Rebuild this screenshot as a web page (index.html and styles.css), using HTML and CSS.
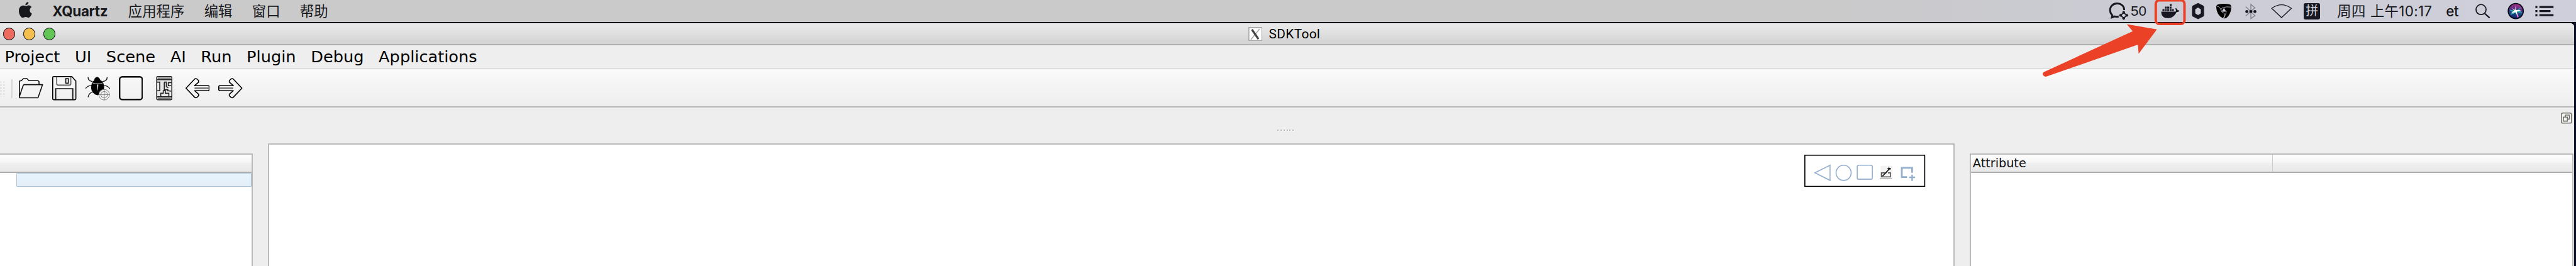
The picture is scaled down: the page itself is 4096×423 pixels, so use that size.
FILE: index.html
```html
<!DOCTYPE html>
<html lang="zh">
<head>
<meta charset="utf-8">
<title>SDKTool</title>
<link rel="stylesheet" href="styles.css">
</head>
<body>
<div class="screen">
  <header class="macbar">
    <svg class="apple" viewBox="0 0 26 32"><path d="M13.500 8.200C15.500 8.200 17 6.800 19.500 6.800C22 6.900 24.200 8.300 25.300 10.300C20 13.500 20.700 21 26 23.200C24.800 26.500 22.200 31 19.500 31.200C17.200 31.300 16.500 29.900 13.600 29.900C10.700 29.900 10 31.200 7.700 31.300C4 31.400 0 24.200 0 18C0 11.600 3.600 7.500 8 7.300C10.300 7.200 12 8.200 13.500 8.200ZM13 6.500C13 2.700 16 .2 19 0C19.300 3.500 16.500 6.600 13 6.500Z"/></svg>
    <nav class="macmenu"><b>XQuartz</b><span>应用程序</span><span>编辑</span><span>窗口</span><span>帮助</span></nav>
    <div class="status">
      <svg class="s-chat" viewBox="4180 0 50 44"><g fill="none" stroke="#171821" stroke-width="3.600"><path d="M4217 20C4217 2 4188.500 3 4189 20.500C4189 25 4191 28 4193.500 30.500L4192.500 34.500L4198 32.500Q4202 33.500 4206 32.800"/><path d="M4216 25L4222 30.500L4216 36L4210 30.500Z" stroke-width="2.200"/></g><g fill="#171821"><circle cx="4216" cy="24.500" r="2.700"/><circle cx="4222.300" cy="30.500" r="2.700"/><circle cx="4216" cy="36.500" r="2.700"/><circle cx="4209.700" cy="30.500" r="2.700"/></g></svg>
      <span class="count">50</span>
      <svg class="s-docker" viewBox="4274 0 70 44"><path fill="#171821" d="M4291 23H4319Q4321 22.500 4320 19.500L4318.500 17.500L4320 16Q4323 17.500 4323.500 20.500Q4326 20 4327 21.500Q4325.500 24 4321 24.200C4318 31 4312 36 4304 36C4295 36 4290.500 31 4291 23ZM4293.300 18h3.800v4h-3.800zM4298 18h3.800v4h-3.800zM4302.700 18h3.800v4h-3.800zM4307.400 18h3.800v4h-3.800zM4312.100 18h3.800v4h-3.800zM4298 13.200h3.800v4h-3.800zM4302.700 13.200h3.800v4h-3.800zM4307.400 13.200h3.800v4h-3.800zM4307.800 8h3.800v4h-3.800z"/></svg>
      <svg class="s-hex" viewBox="4344 0 50 44"><path fill="#171821" fill-rule="evenodd" d="M4364 6L4374 11Q4376 12 4376 14V30Q4376 32 4374 33L4364 38L4354 33Q4352 32 4352 30V14Q4352 12 4354 11ZM4364 15L4358.500 18.500V26.500L4364 30L4369.500 26.500V18.500Z"/></svg>
      <svg class="s-shield" viewBox="4394 0 50 44"><path d="M4400 13Q4401 9 4405 8.500Q4415 6.500 4426 8.500Q4430 9.500 4430 14Q4430 24 4424 32Q4419 38 4413 36Q4401 30 4400 13Z"/><path d="M4415.500 15.500L4420 23H4411Z" fill="#cbccd5"/><g fill="none" stroke="#cbccd5" stroke-width="1.100"><path d="M4401 12Q4408 13 4411 23Q4412 25 4415 26Q4419 28 4416 36"/><path d="M4409 20Q4411 12 4429 14"/><path d="M4420 22Q4420 30 4414 35"/></g></svg>
      <svg class="s-bt" viewBox="4444 0 54 44"><path fill="none" stroke="#83848d" stroke-width="1.800" d="M4459 13.500L4477 31L4469 37V8.500L4477 15.500L4459 31.500"/><g fill="#171821"><circle cx="4461" cy="23" r="3"/><circle cx="4469" cy="23" r="3"/><circle cx="4477" cy="23" r="3"/></g></svg>
      <svg class="s-wifi" viewBox="4498 0 66 44"><path fill="none" stroke="#171821" stroke-width="1.700" d="M4509.500 16.500Q4529 2.500 4548.500 16.500L4529 35Z"/></svg>
      <span class="ime">拼</span>
      <span class="clock"><span>周四</span><span>上午10:17</span></span>
      <span class="user">et</span>
      <svg class="s-search" viewBox="4900 0 60 44"><g fill="none" stroke="#171821" stroke-width="2.200"><circle cx="4925" cy="19" r="10"/><path d="M4932 26.500L4942 35.500" stroke-width="2.800"/></g></svg>
      <svg class="s-siri" viewBox="4960 0 66 44"><defs><linearGradient id="siri" x1=".55" y1="0" x2=".4" y2="1"><stop offset="0" stop-color="#b0328c"/><stop offset=".4" stop-color="#55307f"/><stop offset=".65" stop-color="#164a86"/><stop offset="1" stop-color="#101a66"/></linearGradient></defs><circle cx="4994" cy="22" r="15" fill="url(#siri)" stroke="#080914" stroke-width="2.200"/><path fill="#35b8b5" d="M4994 22L5005 14L5000 21L5008 26L4996 24L4983 30L4988 24L4981 19Z"/><path fill="#e765bd" d="M4994 22L4997 35L5000 33Z"/><path fill="#fff" d="M4993 12L4995 20L5005 20L4996 23L4998 32L4993 24L4984 27L4991 21L4986 16L4993 20Z"/></svg>
      <svg class="s-list" viewBox="5026 0 54 44"><path fill="#171821" d="M5034 12h4v4h-4zM5042 12h28v4h-28zM5034 20h4v4h-4zM5042 20h22v4h-22zM5034 28h4v4h-4zM5042 28h28v4h-28z"/></svg>
    </div>
  </header>

  <main class="window">
    <div class="titlebar">
      <div class="lights"><i class="red"></i><i class="yellow"></i><i class="green"></i></div>
      <div class="title">
        <svg class="xicon" viewBox="0 0 28 28"><rect x="1" y="1" width="26" height="26" fill="#fff" stroke="#aaa" stroke-width="2"/><path d="M22 4L5 25" stroke="#aaa" stroke-width="2"/><path d="M7 5L20 24" stroke="#444" stroke-width="4"/></svg>
        <span>SDKTool</span>
      </div>
    </div>
    <nav class="menubar"><span>Project</span><span>UI</span><span>Scene</span><span>AI</span><span>Run</span><span>Plugin</span><span>Debug</span><span>Applications</span></nav>
    <div class="toolbar">
      <i class="grip"></i><i class="separator"></i>
      <div class="tools">
        <svg viewBox="0 0 48 48"><path fill="none" stroke="#111" stroke-width="2" stroke-linejoin="round" d="M1 43V10L5 9L9 5H16L20 9H38L40 11V17M1 43H38L47 17H10L8 20L1 41"/></svg>
        <svg viewBox="0 0 48 48"><path fill="none" stroke="#000" stroke-width="2" d="M1 3Q1 1 3 1H39L47 10V45Q47 47 45 47H3Q1 47 1 45Z"/><path fill="none" stroke="#555" stroke-width="2" d="M9 1V15Q9 18 12 18H34Q37 18 37 15V1"/><path fill="none" stroke="#111" stroke-width="2" d="M27 5h5v9h-5zM7 47V25H41V47"/><path fill="none" stroke="#888" stroke-width="1" d="M8.500 46V26M39.500 46V26"/></svg>
        <svg viewBox="0 0 48 48"><path fill="none" stroke="#222" stroke-width="1.800" d="M5 2Q5 10 14 11M43 2Q43 10 34 11M0 25Q4 18 14 19M48 25Q44 18 34 19M5 42Q6 34 15 31"/><path d="M15 10Q18 9 18 5Q23-2 28 5Q29 9 33 10Q39 18 36 27Q31 37 24 38Q16 37 12 28Q9 18 15 10Z"/><path fill="#ccc" d="M14 13Q24 16 34 13V14.500Q24 17 14 14.500ZM22.500 17h3l-1 11h-1z"/><circle cx="37" cy="37" r="11" fill="#f2f2f2"/><g fill="none" stroke="#666" stroke-width="1"><circle cx="37" cy="37" r="10.500"/><circle cx="37" cy="37" r="6.500"/><path d="M26 37h22M37 26v22"/></g></svg>
        <svg viewBox="0 0 48 48"><rect x="1.500" y="1.500" width="45" height="45" rx="5" fill="none" stroke="#111" stroke-width="3"/></svg>
        <svg viewBox="0 0 48 48"><path stroke="#ddd" stroke-width="1" d="M1 6L7 0M1 14L8 7M1 22L8 15M1 30L8 23M1 38L8 31M1 46L8 39M40 8L47 1M40 16L47 9M40 24L47 17M40 32L47 25M40 40L47 33M40 47L47 41"/><g fill="none" stroke="#222" stroke-width="2"><rect x="9" y="1" width="30" height="46" rx="2" fill="#e8e8e8"/><path d="M9 7H39M9 41H39M10 12H15V29H10M39 13H32V19H38M24 12V27H31V29L38 30M24 12H28V21L32 23M17 40V34H22V29H26V34H33V40"/></g><path stroke="#777" stroke-width="2" d="M11 4H37M11 44H37"/></svg>
        <svg viewBox="0 0 48 48"><path d="M18 24H46" stroke="#777" stroke-width="3"/><path fill="none" stroke="#000" stroke-width="2" stroke-linejoin="round" d="M1 24L18 6Q20 4 23 6L26 9V12L18 19H46L47 21V27L46 29H18L26 36V39L23 42Q20 44 18 42Z"/></svg>
        <svg viewBox="0 0 48 48"><path d="M2 24H30" stroke="#777" stroke-width="3"/><path fill="none" stroke="#000" stroke-width="2" stroke-linejoin="round" d="M47 24L30 6Q28 4 25 6L22 9V12L30 19H2L1 21V27L2 29H30L22 36V39L25 42Q28 44 30 42Z"/></svg>
      </div>
    </div>
    <div class="dock">
      <i></i>
      <div class="dots"><b></b><b></b><b></b><b></b><b></b><b></b></div>
      <svg class="float" viewBox="0 0 22 22"><rect x="1" y="1" width="20" height="20" rx="3" fill="#f4f4f2" stroke="#74746f" stroke-width="2"/><path fill="none" stroke="#74746f" stroke-width="2" d="M9 8V5H17V13H14M5 9H13V17H5Z"/></svg>
    </div>
    <div class="panes">
      <section class="tree"><div class="head"></div><div class="selected"></div></section>
      <section class="canvas">
        <svg class="shapes" viewBox="0 0 240 64"><rect x="1" y="1" width="238" height="62" fill="#fff" stroke="#000" stroke-width="2"/><g fill="none" stroke="#94aecd" stroke-width="2"><path d="M21 36L51 21V51Z"/><circle cx="78" cy="36" r="15"/><rect x="105" y="21" width="30" height="28" rx="3"/></g><path d="M106 48H134" stroke="#b7c9df" stroke-width="2"/><rect x="151" y="22" width="24" height="25" fill="#f3f3f3"/><path d="M150 47H174" stroke="#b5b5b5" stroke-width="2"/><path fill="none" stroke="#555" stroke-width="2" d="M163 36H153V44H171V36H166"/><path d="M155 43L169 28M166 27L171 29" stroke="#222" stroke-width="2.200"/><path d="M168 24V31M165 27H172" stroke="#222" stroke-width="1.500"/><path fill="none" stroke="#94aecd" stroke-width="3.500" d="M214 36V26H193.500V44.500H204"/><path stroke="#94aecd" stroke-width="3" d="M208 45H220M214 40V52"/></svg>
      </section>
      <section class="attrs"><div class="head"><span>Attribute</span><span></span></div></section>
    </div>
  </main>
  <svg class="annotation" viewBox="4040 0 320 160"><rect x="4279.500" y="0.500" width="57" height="47" rx="7" fill="none" stroke="#eb4127" stroke-width="5"/><path fill="#eb4127" d="M4057.500 143L4233.600 62L4222 48L4281.800 58.300L4245.500 106.700L4244 88.500L4063 151.800Q4058 153.500 4055.500 148.500Q4054 145 4057.500 143Z"/></svg>
</div>
</body>
</html>
```
FILE: styles.css
```css
:root { --u: 0.80094px; }
* { box-sizing: border-box; }
body { margin: 0; background: #0b1026; }
svg { display: block; flex: none; }
.screen { position: relative; width: 4096px; height: 423px; overflow: hidden; display: flex; flex-direction: column; }

.macbar {
  height: 37px; flex: none; display: flex; align-items: flex-start;
  border-bottom: 2px solid #060711;
  background: linear-gradient(90deg, #cacaca 0, #cacaca 70%, #cbccd5 84%, #cecfda 100%);
  color: #17181c;
  font: calc(var(--u) * 28)/35px Inter, "Noto Sans CJK SC", sans-serif;
  white-space: nowrap;
}
.apple { width: calc(var(--u) * 26); height: calc(var(--u) * 32); margin: 3px 0 0 calc(var(--u) * 38); fill: #17181c; }
.macmenu { display: flex; gap: calc(var(--u) * 39); margin-left: calc(var(--u) * 40); width: calc(var(--u) * 4076); }
.macmenu b { font-family: Inter, sans-serif; width: calc(var(--u) * 111.500); letter-spacing: -0.35px; }
.status { display: flex; height: 35px; }
.status svg { height: calc(var(--u) * 44); }
.s-chat { width: calc(var(--u) * 50); }
.count { width: calc(var(--u) * 44); font-family: "Liberation Sans", sans-serif; }
.s-docker { width: calc(var(--u) * 70); }
.s-hex, .s-shield { width: calc(var(--u) * 50); }
.s-bt { width: calc(var(--u) * 54); }
.s-wifi { width: calc(var(--u) * 66); }
.ime {
  width: calc(var(--u) * 32); height: calc(var(--u) * 32); margin: 5px 0 0 calc(var(--u) * 10);
  border-radius: 3px; background: #171821; color: #cfd0da; text-align: center;
  font-size: calc(var(--u) * 25); line-height: 25px;
}
.clock { display: flex; gap: calc(var(--u) * 9); margin-left: calc(var(--u) * 34); width: calc(var(--u) * 216); letter-spacing: 0.3px; }
.user { width: calc(var(--u) * 44); font-weight: 500; letter-spacing: -0.5px; }
.s-search { width: calc(var(--u) * 60); }
.s-siri { width: calc(var(--u) * 66); }
.s-list { width: calc(var(--u) * 54); }

.window { flex: 1; width: calc(var(--u) * 5110); background: #eee; display: flex; flex-direction: column; border-top-right-radius: 6px; overflow: hidden; }
.titlebar {
  height: 35px; flex: none; display: grid; grid-template-columns: calc(var(--u) * 2478) 1fr; align-items: center;
  border-top: 1px solid #f8f8f8; border-bottom: 2px solid #b1b1b1;
  background: linear-gradient(#ebebeb, #d2d2d2);
}
.lights { display: flex; gap: calc(var(--u) * 16); padding-left: calc(var(--u) * 6); }
.lights i { width: calc(var(--u) * 24); height: calc(var(--u) * 24); border-radius: 50%; border: 1px solid; }
.red { background: #ed6a5f; border-color: #d35047; }
.yellow { background: #f5bf50; border-color: #d7a03c; }
.green { background: #62c656; border-color: #50a73d; }
.title { display: flex; align-items: center; gap: calc(var(--u) * 13); font: calc(var(--u) * 26)/30px Roboto, sans-serif; letter-spacing: 0.35px; color: #000; }
.xicon { width: calc(var(--u) * 28); height: calc(var(--u) * 28); }

.menubar {
  height: 38px; flex: none; display: flex; gap: calc(var(--u) * 29.500); padding-left: calc(var(--u) * 9.500);
  border-bottom: 1px solid #c9c9c9; color: #000;
  font: calc(var(--u) * 32)/37px "DejaVu Sans", sans-serif;
}
.toolbar {
  height: 61px; flex: none; display: flex; align-items: center; padding-top: 2px;
  border-bottom: 2px solid #b6b6b6; background: linear-gradient(#fafafa, #eee);
}
.grip { width: 8px; height: 26px; background: radial-gradient(circle, #bbb 0.8px, transparent 1.1px) -1px 0 / 4.8px 4.8px; }
.separator { width: 3px; height: 30px; margin-left: 10px; border-left: 2px solid #d4d4d4; border-right: 1px solid #fff; }
.tools { display: flex; gap: calc(var(--u) * 18); margin-left: 9.400px; }
.tools svg { width: calc(var(--u) * 48); height: calc(var(--u) * 48); }

.dock {
  height: 57px; flex: none; display: grid; grid-template-columns: calc(var(--u) * 2536) 1fr calc(var(--u) * 26);
  align-items: start; border-top: 2px solid #f4f4f4;
}
.dots { display: flex; gap: 2.800px; padding-top: 33px; }
.dots b { width: 2px; height: 2px; background: #bbb; box-shadow: 1px 1px 0 #fafafa; }
.float { width: calc(var(--u) * 22); height: calc(var(--u) * 22); margin-top: 6px; }

.panes {
  flex: 1; display: grid; align-items: stretch;
  grid-template-columns: calc(var(--u) * 502) calc(var(--u) * 3348) calc(var(--u) * 1199);
  column-gap: calc(var(--u) * 30);
}
.tree, .attrs { margin-top: 16px; background: #fff; border: 2px solid #bcbcbc; border-bottom: 0; }
.tree { border-left: 0; }
.canvas { background: #fff; border: 2px solid #bcbcbc; border-bottom: 0; }
.head {
  height: 29px; border-bottom: 2px solid #adadad;
  background: linear-gradient(#fdfdfd, #f5f5f5 49%, #efefef 50%, #e8e8e8);
  display: flex; font: calc(var(--u) * 24)/27px "DejaVu Sans", sans-serif; color: #111;
}
.attrs .head span:first-child { width: calc(var(--u) * 600); padding-left: calc(var(--u) * 4); border-right: 1px solid #ccc; }
.selected {
  height: 22px; margin-left: calc(var(--u) * 32); border: 1px solid #a9c3d4; border-radius: 1px;
  background: linear-gradient(#e7f4fe, #e3edf5);
}
.shapes { width: calc(var(--u) * 240); height: calc(var(--u) * 64); margin: 16px 0 0 calc(var(--u) * 3048); }

.annotation { position: absolute; top: 0; left: calc(var(--u) * 4040); width: calc(var(--u) * 320); height: calc(var(--u) * 160); }
```
